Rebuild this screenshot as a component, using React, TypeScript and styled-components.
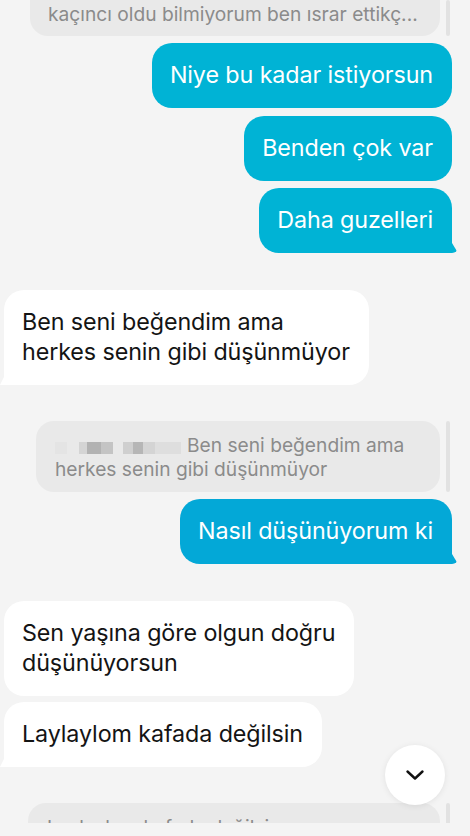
import React from 'react'
import styled, { createGlobalStyle } from 'styled-components'

const GlobalStyle = createGlobalStyle`
  html, body {
    margin: 0;
    padding: 0;
    background: #f4f4f4;
  }
  body {
    font-family: Inter, "Noto Sans", "Liberation Sans", sans-serif;
    -webkit-font-smoothing: antialiased;
  }
`;

const Screen = styled.div`
  position: relative;
  width: 470px;
  height: 836px;
  background: #f4f4f4;
  overflow: hidden;
`;

const Viewport = styled.div`
  height: 823px;
  overflow: hidden;
`;

const Thread = styled.div`
  display: flex;
  flex-direction: column;
`;

const Row = styled.div<{ side: 'left' | 'right'; gap: number }>`
  display: flex;
  justify-content: ${(p) => (p.side === 'right' ? 'flex-end' : 'flex-start')};
  margin-top: ${(p) => p.gap}px;
  padding: ${(p) => (p.side === 'right' ? '0 18px 0 0' : '0 0 0 4px')};
`;

const Bubble = styled.div<{ variant: 'mine' | 'theirs'; tail?: boolean; tone?: string }>`
  position: relative;
  max-width: 340px;
  padding: 17px 19px 18px 18px;
  border-radius: 20px;
  font-size: 23.3px;
  line-height: 30px;
  letter-spacing: -0.1px;
  background: ${(p) => (p.variant === 'mine' ? p.tone || '#00b3d5' : '#ffffff')};
  color: ${(p) => (p.variant === 'mine' ? '#ffffff' : '#141414')};

  ${(p) =>
    p.tail &&
    (p.variant === 'mine'
      ? `
    border-bottom-right-radius: 6px;
    &::after {
      content: '';
      position: absolute;
      right: -6px;
      bottom: 0;
      width: 12px;
      height: 10px;
      background: ${p.tone || '#00b3d5'};
      border-radius: 0 0 6px 0;
      clip-path: polygon(0 0, 50% 0, 100% 100%, 0 100%);
    }
  `
      : `
    border-bottom-left-radius: 6px;
    &::after {
      content: '';
      position: absolute;
      left: -4px;
      bottom: 0;
      width: 10px;
      height: 10px;
      background: #ffffff;
      clip-path: polygon(50% 0, 100% 0, 100% 100%, 0 100%);
    }
  `)}
`;

const QuoteRow = styled.div<{ gap: number; indent: number }>`
  display: flex;
  justify-content: flex-end;
  align-items: stretch;
  gap: 6px;
  margin-top: ${(p) => p.gap}px;
  padding: 0 20px 0 ${(p) => p.indent}px;
`;

const Quote = styled.div<{ clippedTop?: boolean }>`
  flex: 1;
  background: #e9e9e9;
  color: #8b8b8b;
  font-size: 19.2px;
  line-height: 24px;
  border-radius: ${(p) => (p.clippedTop ? '0 0 18px 18px' : '18px')};
  padding: ${(p) => (p.clippedTop ? '2px 18px 10px 18px' : '12px 18px 11px 19px')};
  white-space: nowrap;
  overflow: hidden;
`;

const QuoteBar = styled.div`
  width: 4px;
  border-radius: 2px;
  background: #e2e2e2;
`;

const Wrapped = styled.div`
  white-space: normal;
`;

const BlurName = styled.span`
  display: inline-flex;
  align-items: center;
  vertical-align: -2px;
  height: 14px;
  margin-right: 6px;
`;

const Pixel = styled.span<{ w: number; shade: string; space?: number }>`
  display: inline-block;
  width: ${(p) => p.w}px;
  height: 12px;
  margin-right: ${(p) => p.space || 0}px;
  background: ${(p) => p.shade};
`;

const ScrollButton = styled.button`
  position: absolute;
  right: 25px;
  top: 745px;
  width: 60px;
  height: 60px;
  border: none;
  border-radius: 50%;
  background: #ffffff;
  box-shadow: 0 1px 6px rgba(0, 0, 0, 0.08);
  display: flex;
  align-items: center;
  justify-content: center;
  padding: 0;
  cursor: pointer;
`;

function ChevronDown() {
  return (
    <svg width="24" height="24" viewBox="0 0 24 24" fill="none">
      <path d="M4.5 8.5 L12 15.5 L19.5 8.5" stroke="#111" strokeWidth="2.4" strokeLinecap="round" strokeLinejoin="round" />
    </svg>
  )
}

export default function App() {
  return (
    <Screen>
      <GlobalStyle />
      <Viewport>
        <Thread>
          <QuoteRow gap={0} indent={30}>
            <Quote clippedTop>kaçıncı oldu bilmiyorum ben ısrar ettikç...</Quote>
            <QuoteBar />
          </QuoteRow>

          <Row side="right" gap={7}>
            <Bubble variant="mine">Niye bu kadar istiyorsun</Bubble>
          </Row>
          <Row side="right" gap={8}>
            <Bubble variant="mine">Benden çok var</Bubble>
          </Row>
          <Row side="right" gap={7}>
            <Bubble variant="mine" tail>Daha guzelleri</Bubble>
          </Row>

          <Row side="left" gap={37}>
            <Bubble variant="theirs" tail>
              Ben seni beğendim ama<br />herkes senin gibi düşünmüyor
            </Bubble>
          </Row>

          <QuoteRow gap={36} indent={36}>
            <Quote>
              <Wrapped>
                <BlurName>
                  <Pixel w={12} shade="#e4e4e4" space={12} />
                  <Pixel w={8} shade="#d4d4d4" />
                  <Pixel w={14} shade="#b2b2b2" />
                  <Pixel w={12} shade="#c4c4c4" space={10} />
                  <Pixel w={10} shade="#cfcfcf" />
                  <Pixel w={10} shade="#b6b6b6" />
                  <Pixel w={12} shade="#d4d4d4" />
                  <Pixel w={26} shade="#dedede" />
                </BlurName>
                Ben seni beğendim ama herkes senin gibi düşünmüyor
              </Wrapped>
            </Quote>
            <QuoteBar />
          </QuoteRow>

          <Row side="right" gap={7}>
            <Bubble variant="mine" tone="#03a8d7" tail>Nasıl düşünüyorum ki</Bubble>
          </Row>

          <Row side="left" gap={37}>
            <Bubble variant="theirs">
              Sen yaşına göre olgun doğru<br />düşünüyorsun
            </Bubble>
          </Row>
          <Row side="left" gap={6}>
            <Bubble variant="theirs" tail>Laylaylom kafada değilsin</Bubble>
          </Row>

          <QuoteRow gap={36} indent={28}>
            <Quote>Laylaylom kafada değilsin</Quote>
            <QuoteBar />
          </QuoteRow>
        </Thread>
      </Viewport>
      <ScrollButton aria-label="Aşağı kaydır">
        <ChevronDown />
      </ScrollButton>
    </Screen>
  )
}
